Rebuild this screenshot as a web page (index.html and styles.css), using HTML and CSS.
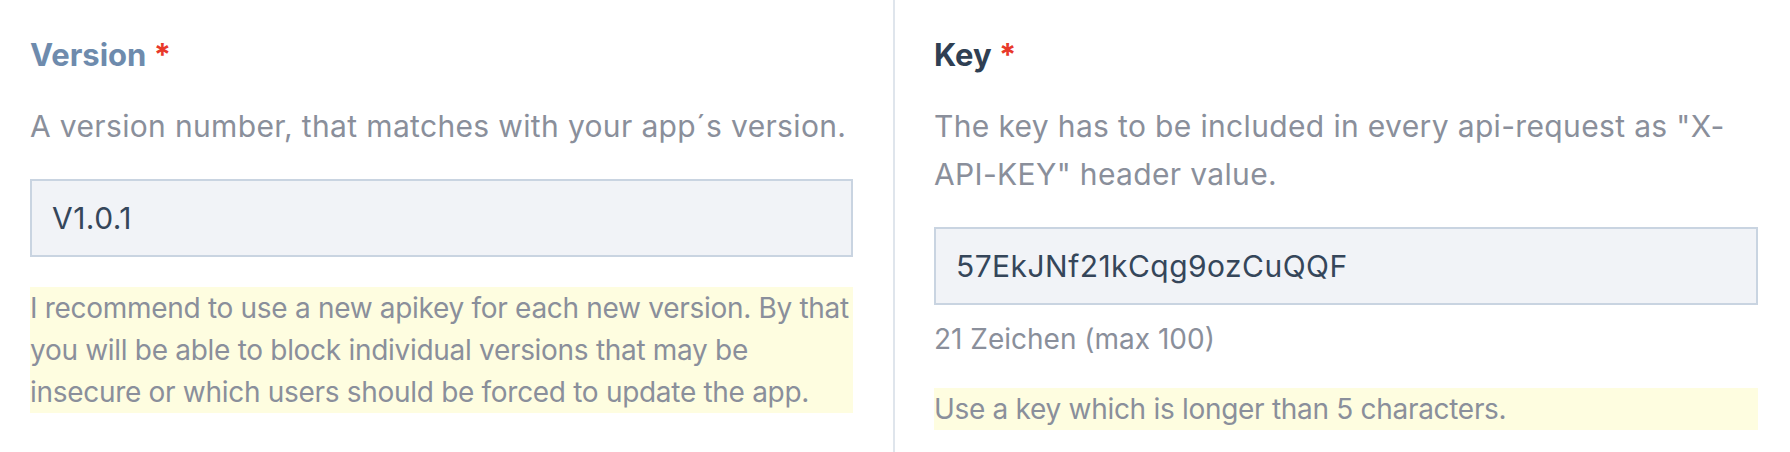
FILE: index.html
```html
<!DOCTYPE html>
<html lang="en">
<head>
<meta charset="utf-8">
<title>App version form</title>
<link rel="stylesheet" href="styles.css">
</head>
<body>
<div class="form-grid">
  <section class="field field-left">
    <label class="label label-active">Version <span class="req">*</span></label>
    <p class="desc">A version number, that matches with your app´s version.</p>
    <div class="input">V1.0.1</div>
    <p class="hint">I recommend to use a new apikey for each new version. By that you will be able to block individual versions that may be insecure or which users should be forced to update the app.</p>
  </section>
  <section class="field field-right">
    <label class="label">Key <span class="req">*</span></label>
    <p class="desc">The key has to be included in every api-request as "X-API-KEY" header value.</p>
    <div class="input">57EkJNf21kCqg9ozCuQQF</div>
    <p class="counter">21 Zeichen (max 100)</p>
    <p class="hint">Use a key which is longer than 5 characters.</p>
  </section>
</div>
</body>
</html>
```

FILE: styles.css
```css
* { box-sizing: border-box; }
html, body {
  margin: 0;
  padding: 0;
  background: #ffffff;
  font-family: "Inter", "Noto Sans", sans-serif;
}
.form-grid {
  display: grid;
  grid-template-columns: 893px 1fr;
  height: 452px;
}
.field {
  display: flex;
  flex-direction: column;
  align-items: stretch;
  padding-top: 35px;
}
.field-left {
  padding-left: 30px;
  padding-right: 40px;
}
.field-right {
  border-left: 2px solid #dfe5ec;
  padding-left: 39px;
  padding-right: 32px;
}
.label {
  font-size: 31px;
  line-height: 40px;
  font-weight: 700;
  color: #2f3f53;
  margin: 0;
}
.label-active { color: #6e8bad; }
.req { color: #e8392a; }
.desc {
  margin: 27px 0 0;
  font-size: 30px;
  line-height: 48px;
  letter-spacing: 0.35px;
  color: #8a8f9b;
}
.input {
  margin-top: 29px;
  height: 78px;
  border: 2px solid #c9d4e1;
  background: #f1f3f7;
  padding: 0 20px;
  display: flex;
  align-items: center;
  font-size: 30px;
  letter-spacing: 0.45px;
  color: #35465a;
}
.counter {
  margin: 13px 0 0;
  font-size: 28px;
  line-height: 42px;
  color: #8a8f9b;
}
.hint {
  margin: 30px 0 0;
  background: #fefde0;
  font-size: 28px;
  line-height: 42px;
  letter-spacing: -0.3px;
  color: #8a8f9b;
}
.counter + .hint { margin-top: 28px; }
```
